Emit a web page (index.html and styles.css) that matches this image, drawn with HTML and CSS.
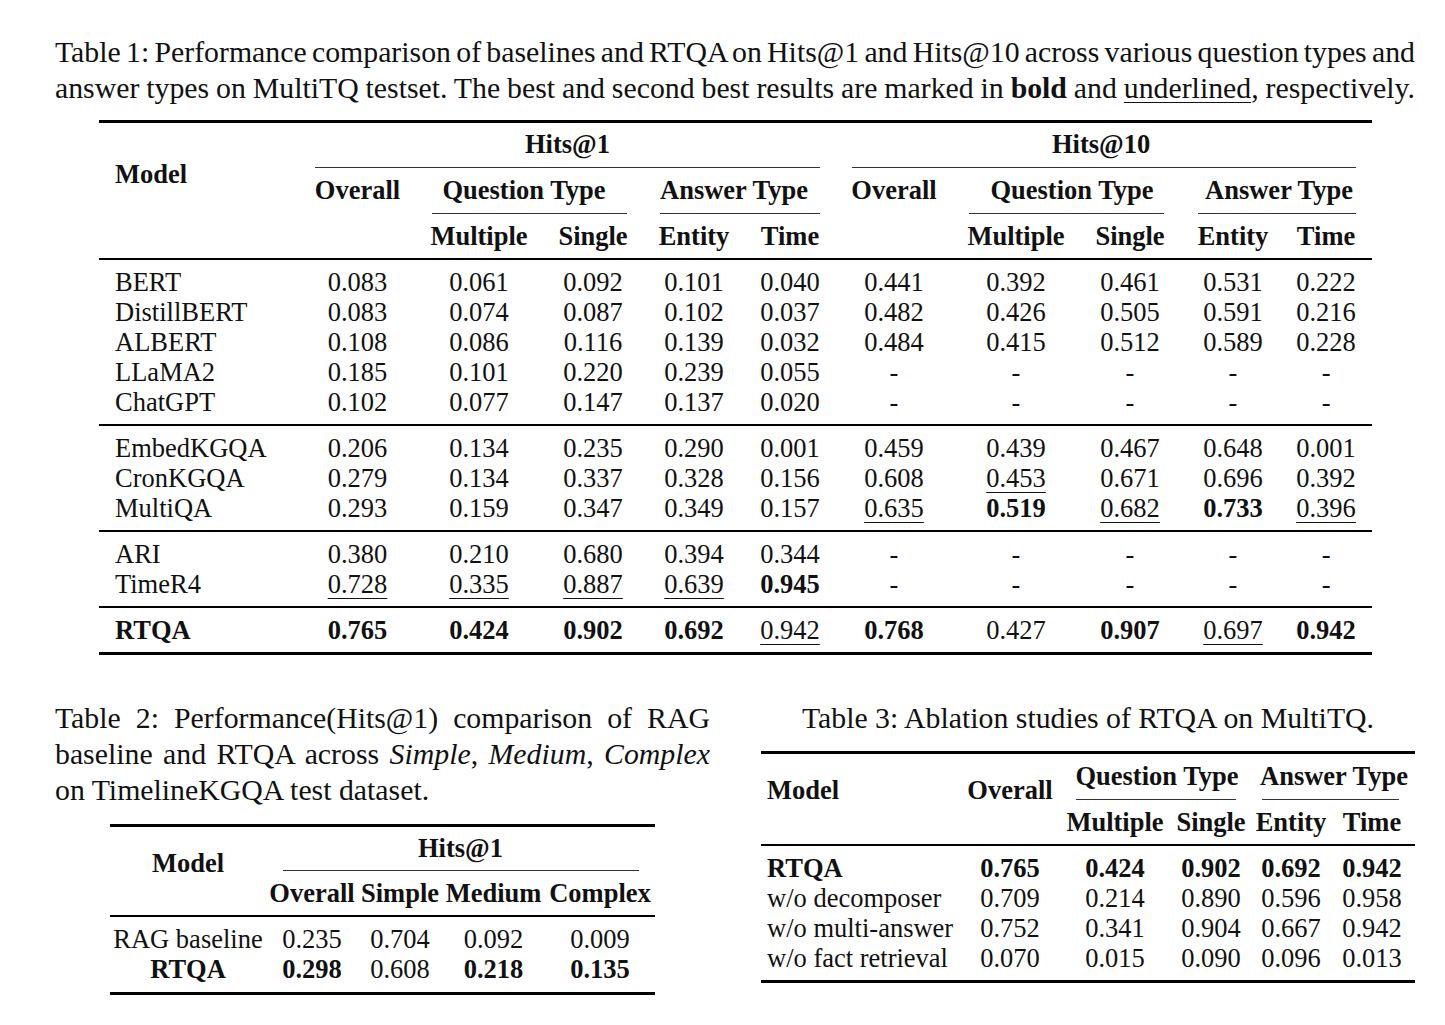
FILE: index.html
```html
<!DOCTYPE html>
<html lang="en">
<head>
<meta charset="utf-8">
<title>RTQA tables</title>
<link rel="stylesheet" href="styles.css">
</head>
<body>
<div class="page">
  <div class="cap cap1">
    <span class="jl">Table 1: Performance comparison of baselines and RTQA on Hits@1 and Hits@10 across various question types and</span>
    <span class="jl">answer types on MultiTQ testset. The best and second best results are marked in <b>bold</b> and <u>underlined</u>, respectively.</span>
  </div>

  <table class="t t1">
    <colgroup>
      <col class="w206"><col class="w105"><col class="w138"><col class="w90"><col class="w112"><col class="w80">
      <col class="w128"><col class="w116"><col class="w112"><col class="w94"><col class="w92">
    </colgroup>
    <thead>
      <tr class="top">
        <th rowspan="2" class="model-h">Model</th>
        <th colspan="5"><div class="hd">Hits@1</div><div class="cmid r1a"></div></th>
        <th colspan="5"><div class="hd">Hits@10</div><div class="cmid r1b"></div></th>
      </tr>
      <tr class="h2">
        <th><div class="hd">Overall</div></th>
        <th colspan="2"><div class="hd">Question Type</div><div class="cmid r2a"></div></th>
        <th colspan="2"><div class="hd">Answer Type</div><div class="cmid r2b"></div></th>
        <th><div class="hd">Overall</div></th>
        <th colspan="2"><div class="hd">Question Type</div><div class="cmid r2c"></div></th>
        <th colspan="2"><div class="hd">Answer Type</div><div class="cmid r2d"></div></th>
      </tr>
      <tr class="h3">
        <th></th><th></th>
        <th>Multiple</th><th>Single</th><th>Entity</th><th>Time</th>
        <th></th>
        <th>Multiple</th><th>Single</th><th>Entity</th><th>Time</th>
      </tr>
    </thead>
    <tbody>
      <tr class="gf"><td class="m">BERT</td><td>0.083</td><td>0.061</td><td>0.092</td><td>0.101</td><td>0.040</td><td>0.441</td><td>0.392</td><td>0.461</td><td>0.531</td><td>0.222</td></tr>
      <tr><td class="m">DistillBERT</td><td>0.083</td><td>0.074</td><td>0.087</td><td>0.102</td><td>0.037</td><td>0.482</td><td>0.426</td><td>0.505</td><td>0.591</td><td>0.216</td></tr>
      <tr><td class="m">ALBERT</td><td>0.108</td><td>0.086</td><td>0.116</td><td>0.139</td><td>0.032</td><td>0.484</td><td>0.415</td><td>0.512</td><td>0.589</td><td>0.228</td></tr>
      <tr><td class="m">LLaMA2</td><td>0.185</td><td>0.101</td><td>0.220</td><td>0.239</td><td>0.055</td><td>-</td><td>-</td><td>-</td><td>-</td><td>-</td></tr>
      <tr class="gl"><td class="m">ChatGPT</td><td>0.102</td><td>0.077</td><td>0.147</td><td>0.137</td><td>0.020</td><td>-</td><td>-</td><td>-</td><td>-</td><td>-</td></tr>

      <tr class="gf"><td class="m">EmbedKGQA</td><td>0.206</td><td>0.134</td><td>0.235</td><td>0.290</td><td>0.001</td><td>0.459</td><td>0.439</td><td>0.467</td><td>0.648</td><td>0.001</td></tr>
      <tr><td class="m">CronKGQA</td><td>0.279</td><td>0.134</td><td>0.337</td><td>0.328</td><td>0.156</td><td>0.608</td><td><u>0.453</u></td><td>0.671</td><td>0.696</td><td>0.392</td></tr>
      <tr class="gl"><td class="m">MultiQA</td><td>0.293</td><td>0.159</td><td>0.347</td><td>0.349</td><td>0.157</td><td><u>0.635</u></td><td><b>0.519</b></td><td><u>0.682</u></td><td><b>0.733</b></td><td><u>0.396</u></td></tr>

      <tr class="gf"><td class="m">ARI</td><td>0.380</td><td>0.210</td><td>0.680</td><td>0.394</td><td>0.344</td><td>-</td><td>-</td><td>-</td><td>-</td><td>-</td></tr>
      <tr class="gl"><td class="m">TimeR4</td><td><u>0.728</u></td><td><u>0.335</u></td><td><u>0.887</u></td><td><u>0.639</u></td><td><b>0.945</b></td><td>-</td><td>-</td><td>-</td><td>-</td><td>-</td></tr>

      <tr class="gf gl end"><td class="m"><b>RTQA</b></td><td><b>0.765</b></td><td><b>0.424</b></td><td><b>0.902</b></td><td><b>0.692</b></td><td><u>0.942</u></td><td><b>0.768</b></td><td>0.427</td><td><b>0.907</b></td><td><u>0.697</u></td><td><b>0.942</b></td></tr>
    </tbody>
  </table>

  <div class="bottom">
    <div class="col-left">
      <div class="cap cap2">Table 2: Performance(Hits@1) comparison of RAG baseline and RTQA across <i>Simple</i>, <i>Medium</i>, <i>Complex</i> on TimelineKGQA test dataset.</div>
      <table class="t t2">
        <colgroup>
          <col class="w156"><col class="w92"><col class="w84"><col class="w103"><col class="w110">
        </colgroup>
        <thead>
          <tr class="top">
            <th rowspan="2" class="model-h2">Model</th>
            <th colspan="4"><div class="hd">Hits@1</div><div class="cmid r3a"></div></th>
          </tr>
          <tr class="h3">
            <th>Overall</th><th>Simple</th><th>Medium</th><th>Complex</th>
          </tr>
        </thead>
        <tbody>
          <tr class="gf"><td class="mc">RAG baseline</td><td>0.235</td><td>0.704</td><td>0.092</td><td>0.009</td></tr>
          <tr class="gl2 end"><td class="mc"><b>RTQA</b></td><td><b>0.298</b></td><td>0.608</td><td><b>0.218</b></td><td><b>0.135</b></td></tr>
        </tbody>
      </table>
    </div>

    <div class="col-right">
      <div class="cap cap3">Table 3: Ablation studies of RTQA on MultiTQ.</div>
      <table class="t t3">
        <colgroup>
          <col class="w198"><col class="w102"><col class="w108"><col class="w84"><col class="w76"><col class="w86">
        </colgroup>
        <thead>
          <tr class="top">
            <th rowspan="2" class="model-h3">Model</th>
            <th rowspan="2" class="ov-h3">Overall</th>
            <th colspan="2"><div class="hd">Question Type</div><div class="cmid r4a"></div></th>
            <th colspan="2"><div class="hd">Answer Type</div><div class="cmid r4b"></div></th>
          </tr>
          <tr class="h3">
            <th>Multiple</th><th>Single</th><th>Entity</th><th>Time</th>
          </tr>
        </thead>
        <tbody>
          <tr class="gf"><td class="m3"><b>RTQA</b></td><td><b>0.765</b></td><td><b>0.424</b></td><td><b>0.902</b></td><td><b>0.692</b></td><td><b>0.942</b></td></tr>
          <tr><td class="m3">w/o decomposer</td><td>0.709</td><td>0.214</td><td>0.890</td><td>0.596</td><td>0.958</td></tr>
          <tr><td class="m3">w/o multi-answer</td><td>0.752</td><td>0.341</td><td>0.904</td><td>0.667</td><td>0.942</td></tr>
          <tr class="gl end"><td class="m3">w/o fact retrieval</td><td>0.070</td><td>0.015</td><td>0.090</td><td>0.096</td><td>0.013</td></tr>
        </tbody>
      </table>
    </div>
  </div>
</div>
</body>
</html>
```

FILE: styles.css
```css
html, body {
  margin: 0;
  padding: 0;
  background: #ffffff;
}

body {
  font-family: "Liberation Serif", "Times New Roman", serif;
  color: #111111;
}

.page {
  width: 1360px;
  padding: 34px 0 0 55px;
}

.cap {
  font-size: 29.8px;
  line-height: 36px;
}

.cap1 .jl {
  display: block;
  white-space: nowrap;
  word-spacing: -4px;
  text-align: justify;
  text-align-last: justify;
}

.cap u {
  text-decoration-thickness: 1px;
  text-underline-offset: 4px;
}

/* ---------- generic table ---------- */
.t {
  border-collapse: separate;
  border-spacing: 0;
  table-layout: fixed;
  font-size: 26.5px;
  line-height: 30px;
}

.t th,
.t td {
  padding: 0;
  text-align: center;
  vertical-align: top;
  white-space: nowrap;
}

.t th {
  font-weight: bold;
}

.t td b {
  font-weight: bold;
}

.t u {
  text-decoration-thickness: 1px;
  text-underline-offset: 5px;
}

.t tr.top th {
  border-top: 3px solid #000;
  padding-top: 6px;
}

.t tr.h2 th {
  padding-top: 7px;
}

.t tr.h3 th {
  padding-top: 7px;
  padding-bottom: 7px;
}

.hd {
  height: 30px;
}

.cmid {
  border-top: 1px solid #333;
  margin-top: 8px;
}

.t tr.gf td {
  border-top: 2px solid #000;
  padding-top: 7px;
}

.t tr.gl td {
  padding-bottom: 7px;
}

.t tr.gl2 td {
  padding-bottom: 8px;
}

.t tr.end td {
  border-bottom: 3px solid #000;
}

/* ---------- table 1 ---------- */
.t1 {
  width: 1273px;
  margin: 14px 0 0 44px;
}

.w206 { width: 206px; }
.w105 { width: 105px; }
.w138 { width: 138px; }
.w90 { width: 90px; }
.w112 { width: 112px; }
.w80 { width: 80px; }
.w128 { width: 128px; }
.w116 { width: 116px; }
.w94 { width: 94px; }
.w92 { width: 92px; }
.w156 { width: 156px; }
.w84 { width: 84px; }
.w103 { width: 103px; }
.w110 { width: 110px; }
.w198 { width: 198px; }
.w102 { width: 102px; }
.w108 { width: 108px; }
.w76 { width: 76px; }
.w86 { width: 86px; }

.t1 tr.top th.model-h {
  text-align: left;
  padding-left: 16px;
  padding-top: 36px;
}

.t1 td.m {
  text-align: left;
  padding-left: 16px;
}

.r1a { margin-left: 10px; margin-right: 10px; }
.r1b { margin-left: 22px; margin-right: 16px; }
.r2a { margin-left: 22px; margin-right: 11px; }
.r2b { margin-left: 22px; margin-right: 10px; }
.r2c { margin-left: 11px; margin-right: 22px; }
.r2d { margin-left: 12px; margin-right: 16px; }

/* ---------- bottom section ---------- */
.bottom {
  display: flex;
  gap: 51px;
  margin-top: 45px;
}

.col-left {
  width: 656px;
}

.col-right {
  width: 654px;
}

.cap2 {
  text-align: justify;
}

.cap3 {
  text-align: center;
}

.t2 {
  width: 545px;
  margin: 16px 0 0 55px;
}

.t2 tr.top th.model-h2 {
  padding-top: 21px;
}

.t2 tr.top th .cmid {
  margin-top: 7px;
}

.t2 td.mc {
  text-align: center;
}

.r3a { margin-left: 17px; margin-right: 16px; }

.t3 {
  width: 654px;
  margin-top: 15px;
}

.t3 tr.top th {
  padding-top: 7px;
}

.t3 tr.top th.model-h3 {
  text-align: left;
  padding-left: 6px;
  padding-top: 21px;
}

.t3 tr.top th.ov-h3 {
  padding-top: 21px;
}

.t3 td.m3 {
  text-align: left;
  padding-left: 6px;
}

.r4a { margin-left: 15px; margin-right: 17px; }
.r4b { margin-left: 9px; margin-right: 16px; }
```
